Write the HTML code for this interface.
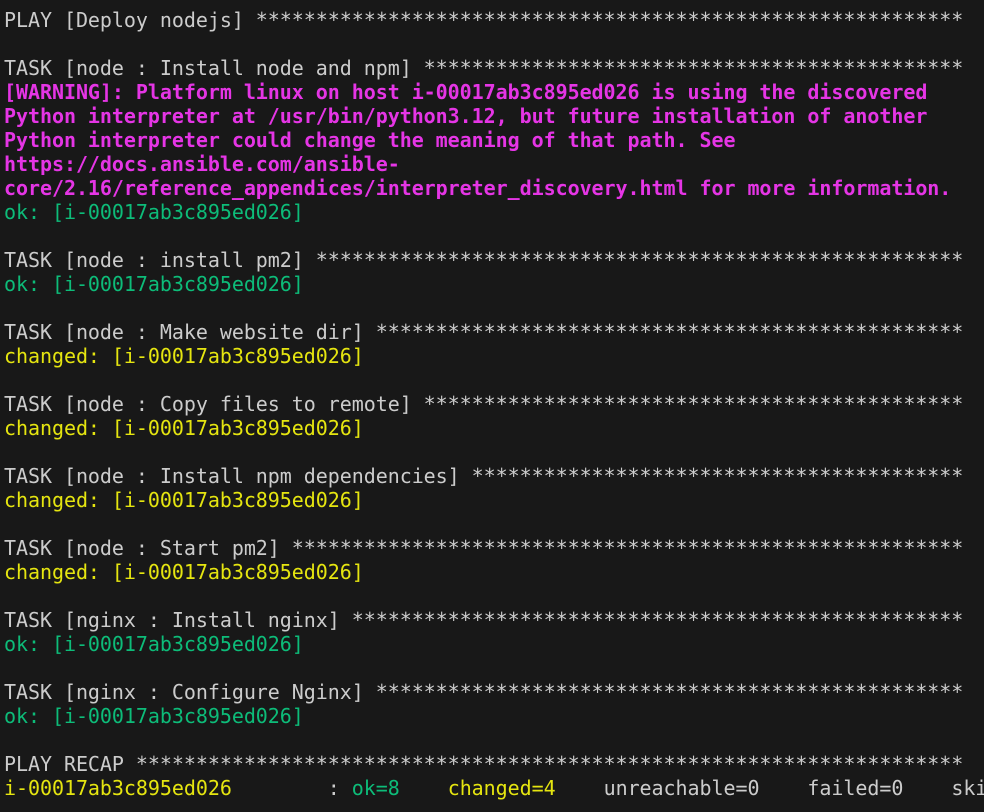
<!DOCTYPE html>
<html><head><meta charset="utf-8"><style>
html,body{margin:0;padding:0;background:#181818;width:984px;height:812px;overflow:hidden}
pre{margin:0;padding:8px 0 0 4px;font-family:"DejaVu Sans Mono","Liberation Mono",monospace;font-size:20px;letter-spacing:-0.05px;line-height:24px;color:#cccccc;white-space:pre;overflow:hidden;width:980px}
.g{color:#0dbc79}.y{color:#e5e510}.m{color:#e535e5;font-weight:bold}
</style></head><body><pre>PLAY [Deploy nodejs] ***********************************************************

TASK [node : Install node and npm] *********************************************
<span class="m">[WARNING]: Platform linux on host i-00017ab3c895ed026 is using the discovered
Python interpreter at /usr/bin/python3.12, but future installation of another
Python interpreter could change the meaning of that path. See
https://docs.ansible.com/ansible-
core/2.16/reference_appendices/interpreter_discovery.html for more information.</span>
<span class="g">ok: [i-00017ab3c895ed026]</span>

TASK [node : install pm2] ******************************************************
<span class="g">ok: [i-00017ab3c895ed026]</span>

TASK [node : Make website dir] *************************************************
<span class="y">changed: [i-00017ab3c895ed026]</span>

TASK [node : Copy files to remote] *********************************************
<span class="y">changed: [i-00017ab3c895ed026]</span>

TASK [node : Install npm dependencies] *****************************************
<span class="y">changed: [i-00017ab3c895ed026]</span>

TASK [node : Start pm2] ********************************************************
<span class="y">changed: [i-00017ab3c895ed026]</span>

TASK [nginx : Install nginx] ***************************************************
<span class="g">ok: [i-00017ab3c895ed026]</span>

TASK [nginx : Configure Nginx] *************************************************
<span class="g">ok: [i-00017ab3c895ed026]</span>

PLAY RECAP *********************************************************************
<span class="y">i-00017ab3c895ed026</span>        : <span class="g">ok=8</span>    <span class="y">changed=4</span>    unreachable=0    failed=0    skipped=0    rescued=0    ignored=0
</pre></body></html>
